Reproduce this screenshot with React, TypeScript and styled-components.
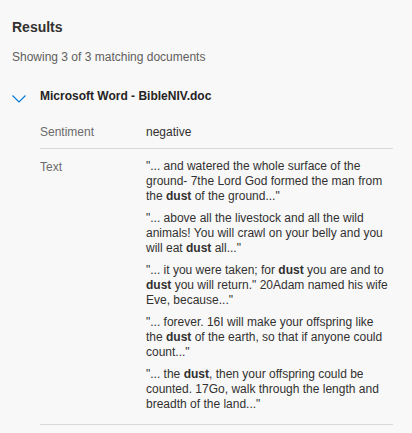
import React from "react";
import styled, { createGlobalStyle } from "styled-components";

const Global = createGlobalStyle`
  html, body { margin: 0; padding: 0; background: #f8f8f8; }
  body { font-family: "Liberation Sans", Arial, sans-serif; color: #323130; }
`;

const Page = styled.div`
  padding: 17px 12px 0 12px;
  width: 412px;
  box-sizing: border-box;
`;

const Title = styled.h2`
  margin: 0;
  font-size: 14px;
  line-height: 20px;
  font-weight: bold;
  color: #323130;
`;

const Summary = styled.div`
  margin-top: 12px;
  font-size: 12px;
  line-height: 16px;
  color: #605e5c;
`;

const DocHeader = styled.div`
  margin-top: 23px;
  display: flex;
  align-items: center;
  height: 16px;
`;

const Chevron = styled.svg`
  width: 14px;
  height: 8px;
  margin-right: 14px;
  margin-top: 5px;
  flex: none;
`;

const DocTitle = styled.div`
  font-size: 12px;
  line-height: 16px;
  font-weight: bold;
  color: #252423;
`;

const Table = styled.div`
  margin-left: 28px;
  margin-right: 7px;
  margin-top: 20px;
`;

const Row = styled.div<{ $pad: string }>`
  display: grid;
  grid-template-columns: 106px 1fr;
  padding: ${(p) => p.$pad};
  border-bottom: 1px solid #d9d9d9;
  font-size: 12px;
`;

const Label = styled.div`
  color: #6b6b6b;
  line-height: 16px;
`;

const Value = styled.div`
  color: #323130;
  line-height: 16px;
`;

const Snippets = styled.div`
  display: flex;
  flex-direction: column;
  gap: 7px;
`;

const Snippet = styled.div`
  color: #323130;
  line-height: 15px;
  b { font-weight: bold; }
`;

const snippets: React.ReactNode[] = [
  <>"... and watered the whole surface of the ground- 7the Lord God formed the man from the <b>dust</b> of the ground..."</>,
  <>"... above all the livestock and all the wild animals! You will crawl on your belly and you will eat <b>dust</b> all..."</>,
  <>"... it you were taken; for <b>dust</b> you are and to <b>dust</b> you will return." 20Adam named his wife Eve, because..."</>,
  <>"... forever. 16I will make your offspring like the <b>dust</b> of the earth, so that if anyone could count..."</>,
  <>"... the <b>dust</b>, then your offspring could be counted. 17Go, walk through the length and breadth of the land..."</>,
];

export default function App() {
  return (
    <>
      <Global />
      <Page>
        <Title>Results</Title>
        <Summary>Showing 3 of 3 matching documents</Summary>
        <DocHeader>
          <Chevron viewBox="0 0 14 8">
            <path d="M0.5 0.5 L7 7 L13.5 0.5" fill="none" stroke="#0078d4" strokeWidth="1.1" />
          </Chevron>
          <DocTitle>Microsoft Word - BibleNIV.doc</DocTitle>
        </DocHeader>
        <Table>
          <Row $pad="0 0 8px 0">
            <Label>Sentiment</Label>
            <Value>negative</Value>
          </Row>
          <Row $pad="10px 0 12px 0">
            <Label>Text</Label>
            <Snippets>
              {snippets.map((s, i) => (
                <Snippet key={i}>{s}</Snippet>
              ))}
            </Snippets>
          </Row>
        </Table>
      </Page>
    </>
  );
}
